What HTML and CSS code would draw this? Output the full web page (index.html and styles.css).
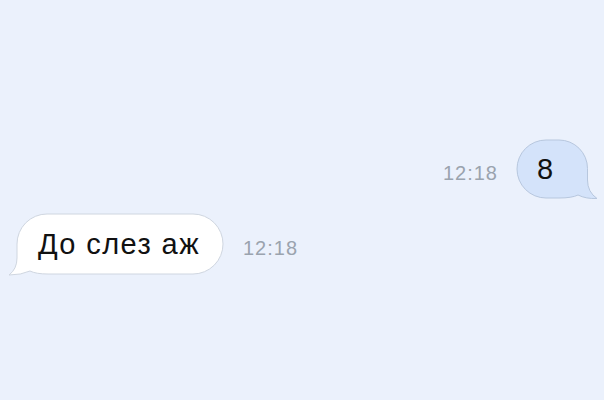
FILE: index.html
```html
<!DOCTYPE html>
<html>

<head>
  <title>Chat</title>
  <meta charset="UTF-8">
  <link rel="stylesheet" href="styles.css">
</head>

<body>
  <div class="chat">
    <div class="row rowOut">
      <span class="time">12:18</span>
      <div class="bubble bubbleOut">
        <svg class="shape" width="82" height="62" viewBox="0 0 82 62">
          <path d="M29 1 H42 A28.5 28.5 0 0 1 70.5 29.5 V41 Q70.5 53 80 59.5 Q69 60 61 56 Q55 59 42 59 H29 A29 29 0 0 1 29 1 Z" />
        </svg>
        <span class="msg">8</span>
      </div>
    </div>
    <div class="row rowIn">
      <div class="bubble bubbleIn">
        <svg class="shape" width="216" height="63" viewBox="0 0 216 63">
          <path d="M39 1 H185 A30 30 0 0 1 185 61 H40 Q28 61 22 58 Q13 62 1 62 Q9 56 9 45 V31 A30 30 0 0 1 39 1 Z" />
        </svg>
        <span class="msg">До слез аж</span>
      </div>
      <span class="time">12:18</span>
    </div>
  </div>
</body>

</html>
```

FILE: styles.css
```css
body {
  margin: 0;
  background-color: #ebf1fc;
  font-family: "Liberation Sans", Arial, sans-serif;
}
.chat {
  height: 400px;
  padding-top: 140px;
  box-sizing: border-box;
}
.row {
  display: flex;
  align-items: center;
}
.rowOut {
  justify-content: flex-end;
  padding-right: 16px;
}
.rowIn {
  margin-top: 16px;
  padding-left: 17px;
}
.bubble {
  position: relative;
  height: 58px;
  line-height: 58px;
}
.shape {
  position: absolute;
  top: -1px;
  overflow: visible;
}
.bubbleOut {
  width: 71px;
}
.bubbleOut .shape {
  left: 0;
}
.bubbleOut .msg {
  padding-left: 20px;
}
.bubbleOut path {
  fill: #d4e3fa;
  stroke: #b7c7de;
  stroke-width: 1;
}
.bubbleIn {
  width: 206px;
  height: 60px;
  line-height: 60px;
}
.bubbleIn .shape {
  left: -9px;
}
.bubbleIn path {
  fill: #ffffff;
  stroke: #cfd6e0;
  stroke-width: 1;
}
.msg {
  position: relative;
  font-size: 29px;
  color: #111111;
}
.bubbleIn .msg {
  padding-left: 21px;
  letter-spacing: 1.4px;
}
.time {
  font-size: 20px;
  letter-spacing: 1px;
  color: #9aa3ae;
  margin-top: 8px;
}
.rowOut .time {
  margin-right: 19px;
}
.rowIn .time {
  margin-left: 20px;
}
```
